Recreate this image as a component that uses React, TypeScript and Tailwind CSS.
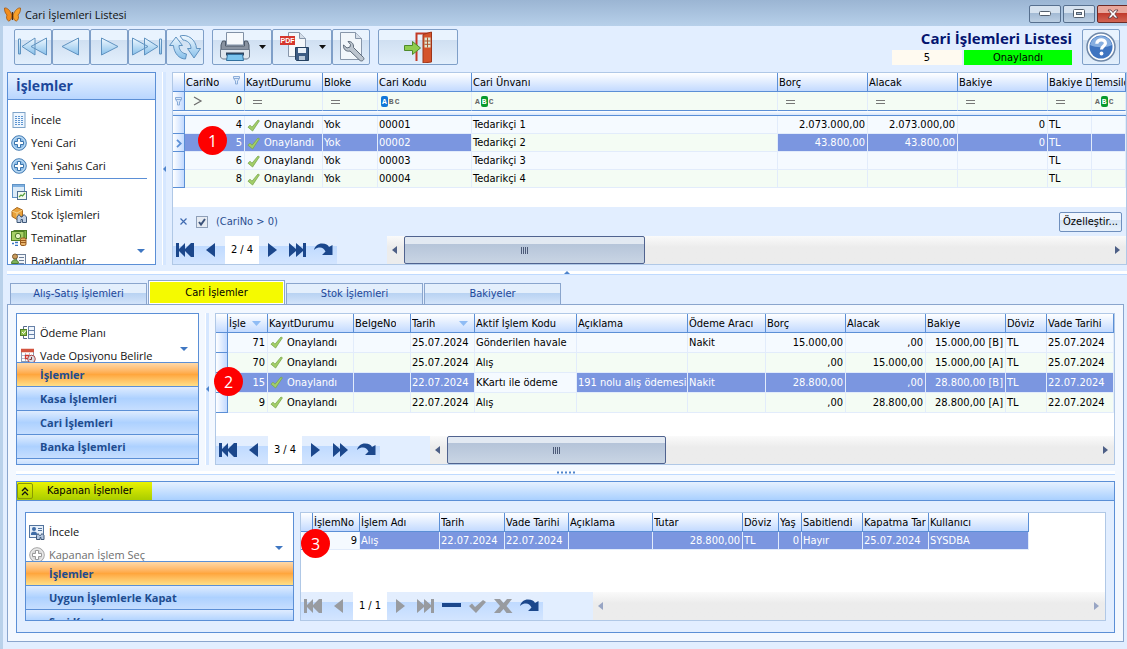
import type { ReactNode } from 'react'
import { clsx } from 'clsx'

type Align = 'left' | 'right'

interface Column {
  title: string
  width?: number
  align?: Align
  mark?: 'sort' | 'filter'
}

interface GridProps {
  label: string
  columns: Column[]
  rows: ReactNode[][]
  selected: number
  focused: number
  rowClass: string
  filters?: ReactNode[]
}

function Svg({ w, h, children }: { w: number; h: number; children: ReactNode }) {
  return (
    <svg width={w} height={h} viewBox={`0 0 ${w} ${h}`} className="block shrink-0" aria-hidden="true">
      {children}
    </svg>
  )
}

function CheckMark() {
  return (
    <Svg w={13} h={13}>
      <path d="M1 8.2 3 6.200l2 2L11 1l1.400 .8L5.600 12Z" fill="#a3cf68" stroke="#7aa64c" strokeWidth=".8" />
    </Svg>
  )
}

function Status() {
  return (
    <span className="flex items-center gap-1 pl-px">
      <CheckMark />
      Onaylandı
    </span>
  )
}

function Equals() {
  return (
    <Svg w={22} h={8}>
      <path d="M6 3.500h9M6 6.500h9" stroke="#777" />
    </Svg>
  )
}

function AbcTag({ mode }: { mode: 'starts' | 'contains' }) {
  const on = 'rounded-xs px-px text-white'
  return (
    <span className="flex items-center gap-px pl-px font-['Liberation_Mono',monospace] text-[8px] leading-[11px] font-bold text-[#666]">
      <span className={clsx(mode === 'starts' && [on, 'bg-[#1177d8]'])}>A</span>
      <span className={clsx(mode === 'contains' && [on, 'bg-[#0a9a2c]'])}>B</span>
      <span>C</span>
    </span>
  )
}

function FunnelIcon() {
  return (
    <Svg w={7} h={9}>
      <path d="M.5 .5h6v2L4.500 5v3h-2V5l-2-2.500Z" fill="#dbe9fb" stroke="#8aacd9" />
      <path d="M1 2.500h5" stroke="#8aacd9" />
    </Svg>
  )
}

const headCell = 'h-[19px] overflow-hidden border-r border-b border-[#5b8fd6] bg-linear-to-b from-white to-[#c3daff] p-0 pt-px text-left font-normal'
const indicatorCell = 'border-r border-b border-[#5b8fd6] bg-linear-to-r from-white to-[#c3daff] p-0'

function DataGrid({ label, columns, rows, selected, focused, rowClass, filters }: GridProps) {
  return (
    <table aria-label={label} className="w-full table-fixed border-separate border-spacing-0 whitespace-nowrap text-black">
      <colgroup>
        <col className="w-3" />
        {columns.map((c, i) => (
          <col key={i} style={c.width ? { width: c.width } : undefined} />
        ))}
      </colgroup>
      <thead>
        <tr>
          <th className={headCell} />
          {columns.map((c, i) =>
            c.title ? (
              <th key={i} scope="col" className={headCell}>
                <span className="flex items-center justify-between gap-0.5 pl-px">
                  <span className="min-w-0 overflow-hidden">{c.title}</span>
                  {c.mark === 'sort' && (
                    <span className="mr-1.5 shrink-0">
                      <Svg w={9} h={5}>
                        <path d="M0 0h9L4.500 5Z" fill="#8fbcf5" />
                      </Svg>
                    </span>
                  )}
                  {c.mark === 'filter' && (
                    <span className="-mt-1 mr-1 shrink-0">
                      <FunnelIcon />
                    </span>
                  )}
                </span>
              </th>
            ) : (
              <th key={i} className="p-0" />
            ),
          )}
        </tr>
      </thead>
      <tbody>
        {filters && (
          <>
            <tr>
              <td className={clsx(indicatorCell, 'h-[19px] pl-0.5')}>
                <FunnelIcon />
              </td>
              {filters.map((f, i) => (
                <td key={i} className="h-[19px] overflow-hidden border-r border-b border-r-[#e2ecfb] border-b-[#5b8fd6] bg-[#f4fcf4] px-0.5 py-0">
                  {f}
                </td>
              ))}
            </tr>
            <tr>
              <td colSpan={columns.length + 1} className="h-[5px] border-b border-[#5b8fd6] bg-linear-to-b from-white to-[#d5e5fc] p-0" />
            </tr>
          </>
        )}
        {rows.map((row, r) => (
          <tr key={r}>
            <td className={clsx(indicatorCell, rowClass)}>
              {r === selected && filters && (
                <span className="flex justify-center">
                  <Svg w={6} h={9}>
                    <path d="m1 .8 3.800 3.700L1 8.200" fill="none" stroke="#5b8fd6" strokeWidth="1.800" />
                  </Svg>
                </span>
              )}
            </td>
            {columns.map((c, i) => (
              <td
                key={i}
                className={clsx(
                  'overflow-hidden p-0',
                  rowClass,
                  c.title && 'border-r border-b border-[#e2ecfb]',
                  c.align === 'right' ? 'pr-0.5 text-right' : 'pl-px',
                  c.title && (r === selected && i !== focused ? 'bg-[#7b96e0] text-white' : r % 2 === 1 ? 'bg-[#f4fcf4]' : 'bg-[#f5faff]'),
                )}
              >
                {row[i]}
              </td>
            ))}
          </tr>
        ))}
      </tbody>
    </table>
  )
}

type NavKind = 'first' | 'prev' | 'next' | 'last' | 'nextPage' | 'delete' | 'post' | 'cancel' | 'refresh'

const navShapes: Record<NavKind, { label: string; shape: ReactNode }> = {
  first: { label: 'İlk kayıt', shape: <path d="M0 1h3v6l6-6v6l6-6h3v14h-3L9 9v6L3 9v6H0Z" /> },
  prev: { label: 'Önceki kayıt', shape: <path d="M13 1v14L4 8Z" /> },
  next: { label: 'Sonraki kayıt', shape: <path d="M6 1v14l9-7Z" /> },
  last: { label: 'Son kayıt', shape: <path d="M1 1l7 6V1l7 6V1h3v14h-3V9l-7 6V9l-7 6Z" /> },
  nextPage: { label: 'Sonraki sayfa', shape: <path d="M2 1l7 6V1l8 7-8 7V9l-7 6Z" /> },
  delete: { label: 'Sil', shape: <path d="M0 5h19v4H0Z" /> },
  post: { label: 'Kaydet', shape: <path d="m1 8 3-2.500L7 9l8-7 3 2L8 15Z" /> },
  cancel: { label: 'Vazgeç', shape: <path d="M0 1h6l3.500 4L13 1h5l-5.500 7 6 7h-6l-3-4-3.500 4H0l6-7Z" /> },
  refresh: { label: 'Yenile', shape: <path d="M0 8C1 4 4 1.500 8 1.500c4 0 6 1.500 7 3.500l3.500-2v10H8l3.500-3.500C10 7 8.500 5.500 6 5.500 4 5.500 2 6 0 8Z" /> },
}

function NavButton({ kind, disabled }: { kind: NavKind; disabled?: boolean }) {
  return (
    <button
      type="button"
      aria-label={navShapes[kind].label}
      disabled={disabled}
      className={clsx(
        'flex w-[26px] items-center justify-center bg-linear-to-b from-[#e3eefe] from-35% via-[#bfdaff] via-35% to-[#d3e5ff]',
        disabled ? 'fill-[#989ba0]' : 'fill-[#1b478c]',
      )}
    >
      <Svg w={20} h={16}>{navShapes[kind].shape}</Svg>
    </button>
  )
}

function Triangle({ dir, tone = '#4d5f86' }: { dir: 'left' | 'right' | 'up' | 'down'; tone?: string }) {
  const d = { left: 'M5 0v8L0 4Z', right: 'M0 0v8l5-4Z', up: 'M0 3h6L3 0Z', down: 'M0 0h8L4 4Z' }[dir]
  const size = { left: [5, 8], right: [5, 8], up: [6, 3], down: [8, 4] }[dir]
  return (
    <Svg w={size[0]} h={size[1]}>
      <path d={d} fill={tone} />
    </Svg>
  )
}

function ScrollBar({ thumb, disabled }: { thumb?: string; disabled?: boolean }) {
  const tone = disabled ? '#98a5c4' : '#4d5f86'
  return (
    <div className="ml-[50px] flex min-w-0 flex-1 justify-between bg-linear-to-b from-[#fafafa] to-[#ececec] to-40%">
      <div className="flex">
        <button type="button" aria-label="Sola kaydır" disabled={disabled} className="flex w-[17px] items-center justify-center pr-0.5">
          <Triangle dir="left" tone={tone} />
        </button>
        {thumb && (
          <div className={clsx('flex items-center justify-center gap-px rounded-xs border border-[#50638f] bg-linear-to-b from-[#e2e9f2] from-25% via-[#b5c4d9] via-25% to-[#c9d5e4]', thumb)}>
            {[0, 1, 2, 3].map((n) => (
              <span key={n} className="h-[7px] w-px bg-[#4c5a78]" />
            ))}
          </div>
        )}
      </div>
      <button type="button" aria-label="Sağa kaydır" disabled={disabled} className="flex w-[17px] items-center justify-center">
        <Triangle dir="right" tone={tone} />
      </button>
    </div>
  )
}

function Navigator({ counter, after, disabled, thumb }: { counter: string; after: NavKind[]; disabled?: NavKind[]; thumb?: string }) {
  const off = (k: NavKind) => disabled?.includes(k)
  return (
    <div className="mt-auto flex h-7 shrink-0 bg-[#e2eeff]">
      <NavButton kind="first" disabled={off('first')} />
      <NavButton kind="prev" disabled={off('prev')} />
      <span className="flex w-[34px] items-center justify-center bg-white text-black">{counter}</span>
      {after.map((k) => (
        <NavButton key={k} kind={k} disabled={off(k)} />
      ))}
      <ScrollBar thumb={thumb} disabled={!thumb} />
    </div>
  )
}

function Badge({ n, place }: { n: number; place: string }) {
  return (
    <span className={clsx("absolute z-10 flex size-[29px] items-center justify-center rounded-full bg-[#fe0000] font-['Open_Sans','Noto_Sans',sans-serif] text-base text-white", place)}>
      {n}
    </span>
  )
}

/* ---------- sidebars ---------- */

function PlusIcon({ muted }: { muted?: boolean }) {
  return (
    <Svg w={16} h={16}>
      <circle cx="8" cy="8" r="7.300" fill={muted ? '#d8d8d8' : '#8dbde8'} stroke={muted ? '#a5a5a5' : '#4a7fb4'} />
      <circle cx="8" cy="8" r="6" fill="none" stroke={muted ? '#eee' : '#c9e2f6'} />
      <path d="M6.500 3.500h3v3h3v3h-3v3h-3v-3h-3v-3h3Z" fill="#fff" stroke={muted ? '#9a9a9a' : '#3b74ac'} />
    </Svg>
  )
}

const ListIcon = () => (
  <Svg w={16} h={16}>
    <rect x="2" y=".5" width="12" height="15" fill="#eef6fe" stroke="#7ea3c8" />
    <path d="M4 4.500h8M4 6.500h8M4 8.500h8M4 10.500h8M4 12.500h8" stroke="#5d94d0" strokeDasharray="2 1" />
  </Svg>
)

const RiskIcon = () => (
  <Svg w={16} h={16}>
    <rect x="1.500" y=".5" width="12" height="13" fill="#dcebf8" stroke="#5f93c6" />
    <path d="M2 2h11" stroke="#7fb0e0" strokeWidth="2" />
    <rect x="6.500" y="7.500" width="9" height="8" fill="#f4fbf0" stroke="#4f6f90" />
    <path d="m8 13 2-2 1.500 1 2.500-3" fill="none" stroke="#58a03c" strokeWidth="1.200" />
  </Svg>
)

const StockIcon = () => (
  <Svg w={16} h={16}>
    <path d="m1 4 5-3.500L11.500 3v6L6 12.500 1 9.500Z" fill="#e9a23b" stroke="#a9681c" />
    <path d="m1 4 5 2 5.500-3M6 6v6" fill="none" stroke="#f7d28a" />
    <path d="M6 15.500V10l2-2.500L10 10h1l2-2.500 2.500 2.500v5.500h-4v-3h-1.500v3Z" fill="#c0d0e6" stroke="#3f5878" />
  </Svg>
)

const MoneyIcon = () => (
  <Svg w={16} h={16}>
    <rect x="3" y=".5" width="12.500" height="8" fill="#86b84a" stroke="#4d7d24" />
    <rect x=".5" y="1.500" width="12.500" height="9" fill="#a6d065" stroke="#4d7d24" />
    <circle cx="7" cy="6" r="2.700" fill="#e6f3c4" stroke="#4d7d24" />
    <path d="M1 13.500h2m1-1h3m-3 3h3" stroke="#3a76c4" strokeWidth="1.400" />
    <rect x="9.500" y="8" width="5.500" height="7.500" rx="1.500" fill="#e8b36a" stroke="#9a5a1c" />
    <path d="M10 10.500h5M10 12.500h5" stroke="#9a5a1c" />
  </Svg>
)

const LinksIcon = () => (
  <Svg w={16} h={16}>
    <rect x="5.500" y="1.500" width="9" height="13" fill="#f3f6fa" stroke="#6d7f99" />
    <path d="M8 4.500h5M8 7.500h5M8 10.500h5" stroke="#6d7f99" />
    <circle cx="4" cy="3.500" r="2.500" fill="#c99a5c" stroke="#7b5a2c" />
    <path d="M.5 10.500c0-5 7-5 7 0Z" fill="#7fb35a" stroke="#4c7a30" />
  </Svg>
)

const PlanIcon = () => (
  <Svg w={16} h={16}>
    <path d="M7 1.500H3.500V5M3.500 11v2.500H7" fill="none" stroke="#55698a" />
    <rect x=".5" y="4.500" width="6" height="6" fill="#8fbf4c" stroke="#4f7d28" />
    <path d="m2 7 1.500 1.500L6 5.500" fill="none" stroke="#fff" />
    <rect x="8.500" y="1.500" width="6" height="12" fill="#f0f6fd" stroke="#6781a8" />
    <path d="M9 5.500h6M9 9.500h6" stroke="#6781a8" />
  </Svg>
)

const CalendarIcon = () => (
  <Svg w={16} h={16}>
    <rect x="1.500" y="1.500" width="12" height="12" fill="#fff" stroke="#8e99b0" />
    <path d="M1 2.500h13" stroke="#d3543f" strokeWidth="3.500" />
    <path d="M5.500 5v8M9.500 5v8M2 7.500h11M2 10.500h11" stroke="#b3bccd" />
    <path d="M5.500 7.500h3v3h-3Z" fill="none" stroke="#d3352b" strokeWidth="1.300" />
    <circle cx="11.500" cy="11" r="3.800" fill="#dcdde4" stroke="#b04a48" />
    <path d="M11.500 9v2.500h-2" fill="none" stroke="#7a3a3a" />
  </Svg>
)

const InspectIcon = () => (
  <Svg w={16} h={16}>
    <rect x=".5" y="1.500" width="14" height="12" fill="#e7f0fa" stroke="#53749e" />
    <path d="M2 11V9.500c0-2.500 6-2.500 6 0V11Z" fill="#3f6ca6" />
    <circle cx="5" cy="5" r="2" fill="#3f6ca6" />
    <path d="M9 4.500h4M9 6.500h4" stroke="#53749e" />
    <path d="M7.500 15.500v-4l1.500-2 1.500 2h1l1.500-2 2 2v4h-3v-2h-1v2Z" fill="#b3c6df" stroke="#3f5878" />
  </Svg>
)

interface ItemProps {
  icon: ReactNode
  text: string
  muted?: boolean
}

function SideItem({ icon, text, muted }: ItemProps) {
  return (
    <button type="button" className={clsx('flex h-[23px] w-full shrink-0 items-center gap-1 pl-[3px] text-left', muted ? 'text-[#6e6e6e]' : 'text-[#111]')}>
      {icon}
      {text}
    </button>
  )
}

function GroupBar({ text, active }: { text: string; active?: boolean }) {
  return (
    <button
      type="button"
      className={clsx(
        'h-6 w-full shrink-0 border-t border-[#5b8fd6] pl-[23px] text-left font-bold text-[#1e4c8f]',
        active
          ? 'bg-linear-to-b from-[#ffd9a8] from-0% via-[#ffa63d] via-50% to-[#ffdf86]'
          : 'bg-linear-to-b from-[#dfecff] from-0% via-[#add1ff] via-50% to-[#c6deff]',
      )}
    >
      {text}
    </button>
  )
}

const sideFont = "font-['Open_Sans','Noto_Sans',sans-serif]"

function SidePanel({ width, items, groups }: { width: string; items: ItemProps[]; groups: string[] }) {
  return (
    <aside className={clsx('relative flex shrink-0 flex-col overflow-hidden border border-[#5b8fd6] bg-white', sideFont, width)}>
      <div className="flex h-12 shrink-0 flex-col overflow-hidden pt-[7px]">
        {items.map((it) => (
          <SideItem key={it.text} {...it} />
        ))}
      </div>
      {groups.map((g, i) => (
        <GroupBar key={i} text={g} active={i === 0} />
      ))}
      <span className="absolute top-[33px] right-2.5">
        <Triangle dir="down" tone="#3f77c2" />
      </span>
    </aside>
  )
}

function VSplitter() {
  return (
    <div className="flex w-4 shrink-0 items-center justify-center">
      <div className="flex h-full w-1 items-center border-l border-white bg-[#d6e7ff]">
        <Svg w={3} h={6}>
          <path d="M3 0v6L0 3Z" fill="#4f84cc" />
        </Svg>
      </div>
    </div>
  )
}

function HSplitter({ children }: { children: ReactNode }) {
  return (
    <div className="flex h-4 shrink-0 flex-col items-center justify-center">
      <div className="flex h-1 w-full items-center justify-center border-b border-[#bfdaff] bg-white">{children}</div>
    </div>
  )
}

/* ---------- toolbar ---------- */

function ToolButton({ label, width, menu, children }: { label: string; width: string; menu?: boolean; children: ReactNode }) {
  return (
    <button
      type="button"
      aria-label={label}
      className={clsx(
        'flex h-9 items-center justify-center gap-2 rounded-xs border border-[#7f9fc8] bg-linear-to-b from-[#e9f3fe] from-28% via-[#cfdff1] via-28% to-[#e3effc]',
        width,
      )}
    >
      {children}
      {menu && (
        <Svg w={7} h={4}>
          <path d="M0 0h7L3.500 4Z" fill="#111" />
        </Svg>
      )}
    </button>
  )
}

function Glass({ d }: { d: string }) {
  return (
    <Svg w={32} h={32}>
      <defs>
        <linearGradient id="glass" x1="0" y1="0" x2="0" y2="1">
          <stop offset="0" stopColor="#f1f9ff" />
          <stop offset="1" stopColor="#86bfea" />
        </linearGradient>
      </defs>
      <path d={d} fill="url(#glass)" stroke="#5f92c0" strokeLinejoin="round" />
    </Svg>
  )
}

const PrinterIcon = () => (
  <Svg w={32} h={32}>
    <path d="M7.500 1.500h17V14h-17Z" fill="#f6f9fc" stroke="#8191a6" />
    <path d="M3.500 10h3v5h19v-5h3l1.500 4v8h-28v-8Z" fill="#8993a1" stroke="#4c5868" />
    <path d="M1.500 18.500h29V26l-2 2h-25l-2-2Z" fill="#dfe6ee" stroke="#6c7a8c" />
    <path d="M7 21.500h18v3H7Z" fill="#2e4560" />
    <path d="M8.500 23.500h15l1 6h-17Z" fill="#7cc4ee" stroke="#33719f" />
  </Svg>
)

const PdfIcon = () => (
  <Svg w={32} h={32}>
    <path d="M9.500 1.500h11l6 6v18h-17Z" fill="#f4f7fa" stroke="#8796aa" />
    <path d="M20.500 1.500v6h6" fill="#d5dee9" stroke="#8796aa" />
    <rect x="1" y="5" width="15" height="9" fill="#d5362c" />
    <text x="8.500" y="12" fontSize="7" fontWeight="bold" fill="#fff" textAnchor="middle" fontFamily="Liberation Sans, sans-serif">PDF</text>
    <path d="M16.500 16.500h13v13h-12l-1-1Z" fill="#3d5c83" stroke="#24405f" />
    <path d="M19 17h8v5h-8Z" fill="#eaf1f8" />
    <path d="M20 25h6v4h-6Z" fill="#b9c9da" />
  </Svg>
)

const WrenchIcon = () => (
  <Svg w={32} h={32}>
    <path d="M5.500 1.500h15l6 6v21h-21Z" fill="#f1f6fb" stroke="#8796aa" />
    <path d="M20.500 1.500v6h6" fill="#d5dee9" stroke="#8796aa" />
    <path d="M13 10.500c3-.5 6 2 5.500 6l10 10c1.500 2-1.500 4.500-3.500 3L15 20c-4 1-7-2-6.500-6l3.500 3 3-1 .5-2.500Z" fill="#bcc5cf" stroke="#5e6b7a" />
  </Svg>
)

const DoorIcon = () => (
  <Svg w={32} h={32}>
    <path d="M14.500 30V2.500H28" fill="none" stroke="#c23a26" strokeWidth="2" />
    <path d="M21 3.500 29.500 1v30L21 32Z" fill="#d4532b" stroke="#9e3418" />
    <path d="M22.500 6.500h6v10h-6Z" fill="#dfe6d2" />
    <path d="M25.500 6.500v10M22.500 10h6M22.500 13.300h6" stroke="#a8552f" />
    <path d="M2.500 14.500h8v-4l8 6.500-8 6.500v-4h-8Z" fill="#8fcc4e" stroke="#4e8a2a" />
  </Svg>
)

const HelpIcon = () => (
  <Svg w={32} h={32}>
    <circle cx="16" cy="16" r="14" fill="#fff" stroke="#6e87a8" strokeWidth="1.500" />
    <circle cx="16" cy="16" r="11.500" fill="#3f74c0" />
    <path d="M5 14a11.200 11.200 0 0 1 22 0c-6 3-16 3-22 0Z" fill="#86aee0" />
    <path d="M11.800 12.800c.2-5.300 8.600-5.200 8.600-.5 0 3-3.900 3-3.900 6.200" fill="none" stroke="#fff" strokeWidth="3.200" />
    <circle cx="16.500" cy="22.500" r="1.900" fill="#fff" />
  </Svg>
)

const ButterflyIcon = () => (
  <Svg w={17} h={16}>
    <path d="M8 8C6 3 3 .5 .5 1c0 3 .5 5 2.500 7-1 2-.5 5 1.500 6C7 14 7.500 11 8 9Z" fill="#f28c1c" stroke="#a4560a" strokeWidth=".8" />
    <path d="M9 8c2-5 5-7.500 7.500-7 0 3-.5 5-2.500 7 1 2 .5 5-1.500 6C10 14 9.500 11 9 9Z" fill="#f7a12b" stroke="#a4560a" strokeWidth=".8" />
    <path d="M8.500 5v8" stroke="#4b2a0b" strokeWidth="1.200" />
  </Svg>
)

const windowButton = 'flex h-[18px] w-8 items-center justify-center rounded-xs border border-[#57708f] bg-linear-to-b from-[#d6e2ef] from-45% via-[#a3bad4] via-45% to-[#bccfe3]'

/* ---------- data ---------- */

const accountColumns: Column[] = [
  { title: 'CariNo', width: 60, align: 'right', mark: 'filter' },
  { title: 'KayıtDurumu', width: 78 },
  { title: 'Bloke', width: 55 },
  { title: 'Cari Kodu', width: 94 },
  { title: 'Cari Ünvanı', width: 306 },
  { title: 'Borç', width: 90, align: 'right' },
  { title: 'Alacak', width: 90, align: 'right' },
  { title: 'Bakiye', width: 90, align: 'right' },
  { title: 'Bakiye D', width: 44 },
  { title: 'Temsilc' },
]

const accountRows: ReactNode[][] = [
  ['4', <Status />, 'Yok', '00001', 'Tedarikçi 1', '2.073.000,00', '2.073.000,00', '0', 'TL'],
  ['5', <Status />, 'Yok', '00002', 'Tedarikçi 2', '43.800,00', '43.800,00', '0', 'TL'],
  ['6', <Status />, 'Yok', '00003', 'Tedarikçi 3', '', '', '', 'TL'],
  ['8', <Status />, 'Yok', '00004', 'Tedarikçi 4', '', '', '', 'TL'],
]

const accountFilters: ReactNode[] = [
  <span className="flex items-center justify-between pl-1.5">
    <Svg w={10} h={10}>
      <path d="m1 1 7 4-7 4" fill="none" stroke="#6b6b6b" strokeWidth="1.200" />
    </Svg>
    <input aria-label="CariNo filtresi" defaultValue="0" className="w-8 text-right" />
  </span>,
  <Equals />,
  <Equals />,
  <AbcTag mode="starts" />,
  <AbcTag mode="contains" />,
  <Equals />,
  <Equals />,
  <Equals />,
  <Equals />,
  <AbcTag mode="contains" />,
]

const movementColumns: Column[] = [
  { title: 'İşle', width: 40, align: 'right', mark: 'sort' },
  { title: 'KayıtDurumu', width: 86 },
  { title: 'BelgeNo', width: 57 },
  { title: 'Tarih', width: 64, mark: 'sort' },
  { title: 'Aktif İşlem Kodu', width: 102 },
  { title: 'Açıklama', width: 111 },
  { title: 'Ödeme Aracı', width: 78 },
  { title: 'Borç', width: 80, align: 'right' },
  { title: 'Alacak', width: 80, align: 'right' },
  { title: 'Bakiye', width: 80, align: 'right' },
  { title: 'Döviz', width: 41 },
  { title: 'Vade Tarihi' },
]

const movementRows: ReactNode[][] = [
  ['71', <Status />, '', '25.07.2024', 'Gönderilen havale', '', 'Nakit', '15.000,00', ',00', '15.000,00 [B]', 'TL', '25.07.2024'],
  ['70', <Status />, '', '25.07.2024', 'Alış', '', '', ',00', '15.000,00', '15.000,00 [A]', 'TL', '25.07.2024'],
  ['15', <Status />, '', '22.07.2024', 'KKartı ile ödeme', '191 nolu alış ödemesi', 'Nakit', '28.800,00', ',00', '28.800,00 [B]', 'TL', '22.07.2024'],
  ['9', <Status />, '', '22.07.2024', 'Alış', '', '', ',00', '28.800,00', '28.800,00 [A]', 'TL', '22.07.2024'],
]

const closedColumns: Column[] = [
  { title: 'İşlemNo', width: 47, align: 'right' },
  { title: 'İşlem Adı', width: 80 },
  { title: 'Tarih', width: 65 },
  { title: 'Vade Tarihi', width: 64 },
  { title: 'Açıklama', width: 84 },
  { title: 'Tutar', width: 90, align: 'right' },
  { title: 'Döviz', width: 36 },
  { title: 'Yaş', width: 23, align: 'right' },
  { title: 'Sabitlendi', width: 61 },
  { title: 'Kapatma Tar', width: 66 },
  { title: 'Kullanıcı', width: 100 },
  { title: '' },
]

const closedRows: ReactNode[][] = [
  ['9', 'Alış', '22.07.2024', '22.07.2024', '', '28.800,00', 'TL', '0', 'Hayır', '25.07.2024', 'SYSDBA', ''],
]

const tabs = ['Alış-Satış İşlemleri', 'Cari İşlemler', 'Stok İşlemleri', 'Bakiyeler']

export default function App() {
  return (
    <div className="flex min-h-screen flex-col overflow-hidden bg-[#e2eeff] font-['DejaVu_Sans_Condensed','Noto_Sans',sans-serif] text-[11px] leading-[14px]">
      <header className="flex h-[26px] items-center justify-between overflow-hidden bg-linear-to-b from-[#9bb5d3] to-[#b7d0ea] pl-1">
        <h1 className={clsx('flex items-center gap-1 pt-1 text-[#111]', sideFont)}>
          <ButterflyIcon />
          Cari İşlemleri Listesi
        </h1>
        <div className="-mr-0.5 flex gap-0.5 pt-0.5">
          <button type="button" aria-label="Simge durumuna küçült" className={windowButton}>
            <Svg w={12} h={6}>
              <rect x=".5" y=".5" width="11" height="4" rx="1" fill="#fff" stroke="#55606e" />
            </Svg>
          </button>
          <button type="button" aria-label="Ekranı kapla" className={windowButton}>
            <Svg w={12} h={10}>
              <rect x=".5" y=".5" width="11" height="8" rx="1" fill="#fff" stroke="#55606e" />
              <rect x="3.500" y="3.500" width="5" height="2" fill="#a9bdd4" stroke="#55606e" />
            </Svg>
          </button>
          <button type="button" aria-label="Kapat" className="flex h-[18px] w-8 items-center justify-center rounded-xs border border-[#6d2a26] bg-linear-to-b from-[#e9a79c] from-45% via-[#c0392b] via-45% to-[#d26352]">
            <Svg w={12} h={10}>
              <path d="M1 1h3l2 2.500L8 1h3L7.800 5 11 9H8L6 6.500 4 9H1l3.200-4Z" fill="#fff" stroke="#55343a" strokeWidth=".8" />
            </Svg>
          </button>
        </div>
      </header>

      <div className="flex flex-1 flex-col border-l-3 border-[#b9d1ea] pl-1">
        <div className="flex h-[46px] items-start justify-between pt-[3px] pr-[7px] pl-[7px]">
          <div className="flex gap-2">
            <div className="flex">
              <ToolButton label="İlk" width="w-[38px]">
                <Glass d="M1.500 8h2v15h-2ZM18 7v17L5 15.500ZM29.500 7v17L14 15.500Z" />
              </ToolButton>
              <ToolButton label="Önceki" width="w-[38px]">
                <Glass d="M23.500 7v17L7 15.500Z" />
              </ToolButton>
              <ToolButton label="Sonraki" width="w-[38px]">
                <Glass d="M8.500 7v17L25 15.500Z" />
              </ToolButton>
              <ToolButton label="Son" width="w-[38px]">
                <Glass d="M28.500 8h2v15h-2ZM1.500 7v17L17 15.500ZM13.500 7v17L27 15.500Z" />
              </ToolButton>
              <ToolButton label="Yenile" width="w-[38px]">
                <Glass d="M.5 14.500 7 6l6.500 8.500H10c0 5 3.500 8 7.500 8.500l-1 5C10 28 5 22 4.500 14.500ZM31.500 17.500 25 27l-6.500-9.500H22c0-5-3.500-8-8-8.500l-3-4C19 2.500 27 9 27.500 17.500Z" />
              </ToolButton>
            </div>
            <div className="flex">
              <ToolButton label="Yazdır" width="w-[60px]" menu>
                <PrinterIcon />
              </ToolButton>
              <ToolButton label="PDF olarak kaydet" width="w-[60px]" menu>
                <PdfIcon />
              </ToolButton>
              <ToolButton label="Ayarlar" width="w-[38px]">
                <WrenchIcon />
              </ToolButton>
            </div>
            <ToolButton label="Çıkış" width="w-20">
              <DoorIcon />
            </ToolButton>
          </div>
          <div className="flex gap-2.5">
            <div className="flex flex-col items-end gap-0.5">
              <h2 className="font-['Open_Sans','Noto_Sans',sans-serif] text-[15px] leading-[19px] font-bold text-[#04146f]">Cari İşlemleri Listesi</h2>
              <div className="flex gap-0.5">
                <input aria-label="Kayıt numarası" readOnly value="5" className="h-[15px] w-[70px] bg-[#fffaf0] text-center text-black" />
                <input aria-label="Kayıt durumu" readOnly value="Onaylandı" className="h-[15px] w-[108px] bg-[#00ff00] text-center text-black" />
              </div>
            </div>
            <ToolButton label="Yardım" width="w-[38px]">
              <HelpIcon />
            </ToolButton>
          </div>
        </div>

        <div className="flex h-[193px]">
          <aside className={clsx('relative flex w-[149px] shrink-0 flex-col overflow-hidden border border-[#5b8fd6] bg-white', sideFont)}>
            <h2 className="h-[27px] shrink-0 border-b border-[#5b8fd6] bg-linear-to-b from-[#eaf3ff] to-[#b9d6ff] pl-2 text-sm leading-[26px] font-bold text-[#1c479a]">
              İşlemler
            </h2>
            <div className="flex flex-col pt-2">
              <SideItem icon={<ListIcon />} text="İncele" />
              <SideItem icon={<PlusIcon />} text="Yeni Cari" />
              <SideItem icon={<PlusIcon />} text="Yeni Şahıs Cari" />
              <hr className="my-px mr-2 ml-[25px] border-t border-[#5b8fd6]" />
              <SideItem icon={<RiskIcon />} text="Risk Limiti" />
              <SideItem icon={<StockIcon />} text="Stok İşlemleri" />
              <SideItem icon={<MoneyIcon />} text="Teminatlar" />
              <SideItem icon={<LinksIcon />} text="Bağlantılar" />
            </div>
            <span className="absolute right-2.5 bottom-[11px]">
              <Triangle dir="down" tone="#3f77c2" />
            </span>
          </aside>
          <VSplitter />
          <section className="relative flex min-w-0 flex-1 flex-col border border-[#b0c8e6] bg-white">
            <Badge n={1} place="top-[53px] left-[25px]" />
            <DataGrid label="Cari listesi" columns={accountColumns} rows={accountRows} filters={accountFilters} selected={1} focused={4} rowClass="h-[18px] pt-px" />
            <div className="mt-auto flex h-[29px] shrink-0 items-center justify-between bg-[#e2eeff] pr-1 pl-1.5 text-[#2a4d8f]">
              <div className="flex items-center gap-2">
                <button type="button" aria-label="Filtreyi temizle" className="px-px">
                  <Svg w={7} h={7}>
                    <path d="m.5 .5 6 6m0-6-6 6" stroke="#3f6ab0" strokeWidth="1.200" />
                  </Svg>
                </button>
                <label className="flex items-center gap-2">
                  <input type="checkbox" defaultChecked className="peer sr-only" />
                  <Svg w={12} h={12}>
                    <rect x=".5" y=".5" width="11" height="11" fill="#e6ebf2" stroke="#8e9fb8" />
                    <path d="m3 6 2 2.500L9 3" fill="none" stroke="#3b5279" strokeWidth="2" />
                  </Svg>
                  (CariNo &gt; 0)
                </label>
              </div>
              <button type="button" className="h-5 rounded-xs border border-[#6f8fbd] bg-linear-to-b from-[#f0f6fe] from-40% via-[#d5e3f3] via-40% to-[#e6f0fb] px-[3px] text-black">
                Özelleştir...
              </button>
            </div>
            <div className="flex flex-col">
              <Navigator counter="2 / 4" after={['next', 'last', 'refresh']} thumb="w-[241px]" />
            </div>
          </section>
        </div>

        <HSplitter>
          <Triangle dir="up" tone="#4f84cc" />
        </HSplitter>

        <div role="tablist" className="flex h-[23px] items-end gap-px pl-[3px]">
          {tabs.map((t, i) => (
            <button
              key={t}
              type="button"
              role="tab"
              aria-selected={i === 1}
              className={clsx(
                'w-[137px] border border-b-0 border-[#8aa5cd]',
                i === 1
                  ? 'h-6 bg-[#f5fa00] text-black shadow-[inset_0_0_0_1px_white]'
                  : 'h-[21px] bg-linear-to-b from-[#e4effc] from-45% via-[#b8d2f2] via-45% to-[#d3e4fa] text-[#1c479a]',
              )}
            >
              {t}
            </button>
          ))}
        </div>

        <main className="mr-[3px] mb-[7px] flex flex-1 flex-col border border-[#8aa5cd] bg-[#f3f8ff] px-2 pt-2 pb-2">
          <div className="flex h-[152px]">
            <SidePanel
              width="w-[183px]"
              items={[
                { icon: <PlanIcon />, text: 'Ödeme Planı' },
                { icon: <CalendarIcon />, text: 'Vade Opsiyonu Belirle' },
              ]}
              groups={['İşlemler', 'Kasa İşlemleri', 'Cari İşlemleri', 'Banka İşlemleri', '']}
            />
            <VSplitter />
            <section className="relative flex min-w-0 flex-1 flex-col border border-[#b0c8e6] bg-white">
              <Badge n={2} place="top-[53px] -left-0.5" />
              <DataGrid label="Cari işlemler" columns={movementColumns} rows={movementRows} selected={2} focused={4} rowClass="h-5" />
              <Navigator counter="3 / 4" after={['next', 'nextPage', 'refresh']} thumb="w-[219px]" />
            </section>
          </div>

          <HSplitter>
            <Svg w={20} h={3}>
              <path d="M1 1.500h18" stroke="#4f84cc" strokeWidth="2" strokeDasharray="2 2" />
            </Svg>
          </HSplitter>

          <section className="flex flex-1 flex-col border border-[#5b8fd6] bg-[#e2eeff]">
            <div className="flex h-[19px] border-b border-[#5b8fd6] bg-linear-to-b from-[#e6f1ff] to-[#a9d0ff]">
              <h3 className="flex w-[135px] items-center gap-3.5 bg-linear-to-b from-[#eaf300] to-[#a9cd00] text-black">
                <button type="button" aria-label="Daralt" className="flex size-4 items-center justify-center rounded-xs border border-[#8a9a00]">
                  <Svg w={8} h={9}>
                    <path d="m1 4 3-3 3 3M1 8l3-3 3 3" fill="none" stroke="#111" strokeWidth="1.300" />
                  </Svg>
                </button>
                Kapanan İşlemler
              </h3>
            </div>
            <div className="flex h-[131px] gap-1.5 px-2 pt-[11px] pb-[11px]">
              <SidePanel
                width="w-[269px]"
                items={[
                  { icon: <InspectIcon />, text: 'İncele' },
                  { icon: <PlusIcon muted />, text: 'Kapanan İşlem Seç', muted: true },
                ]}
                groups={['İşlemler', 'Uygun İşlemlerle Kapat', 'Seri Kapat']}
              />
              <section className="relative flex min-w-0 flex-1 flex-col border border-[#b0c8e6] bg-white">
                <Badge n={3} place="top-4 left-0" />
                <DataGrid label="Kapanan işlemler" columns={closedColumns} rows={closedRows} selected={0} focused={0} rowClass="h-[18px]" />
                <Navigator
                  counter="1 / 1"
                  after={['next', 'last', 'delete', 'post', 'cancel', 'refresh']}
                  disabled={['first', 'prev', 'next', 'last', 'post', 'cancel']}
                />
              </section>
            </div>
          </section>
        </main>
      </div>
    </div>
  )
}
